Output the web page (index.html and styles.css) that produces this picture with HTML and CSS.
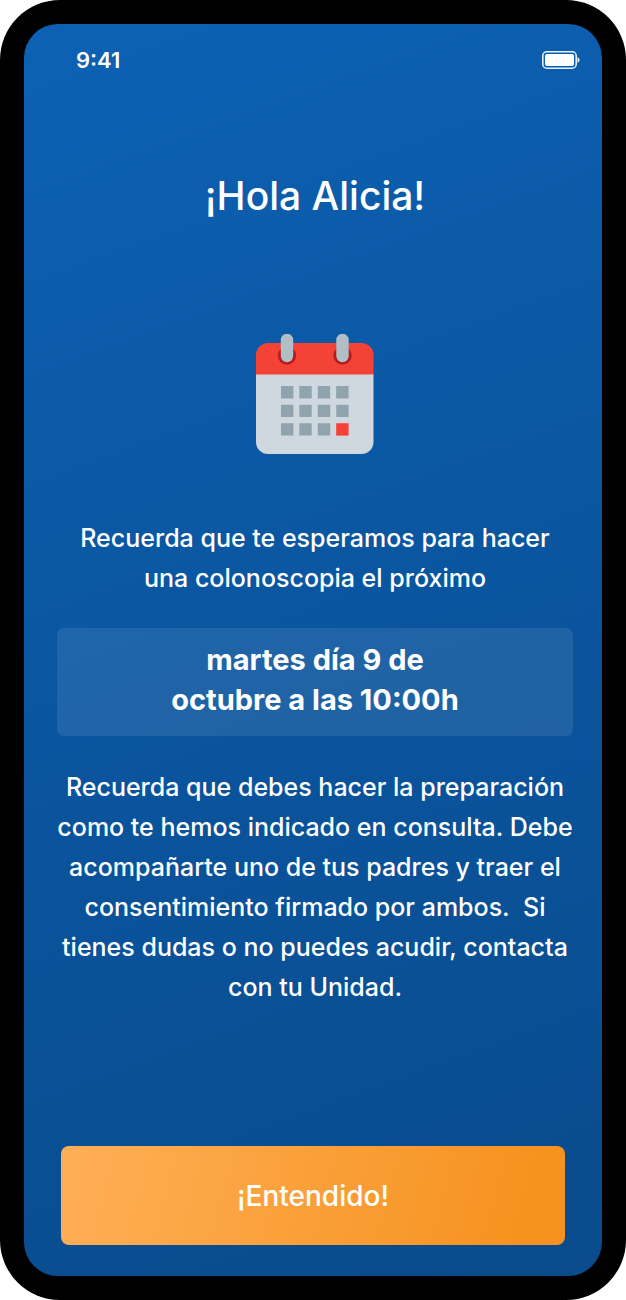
FILE: index.html
```
<!DOCTYPE html>
<html lang="es">
<head>
<meta charset="utf-8">
<meta name="viewport" content="width=device-width, initial-scale=1">
<title>Recordatorio de cita</title>
<link rel="stylesheet" href="styles.css">
</head>
<body>
<div class="phone">
  <div class="screen">
    <header class="status">
      <time class="clock">9:41</time>
      <svg class="battery" viewBox="0 0 38 18" aria-hidden="true">
        <rect x="0.8" y="0.8" width="33.4" height="16.4" rx="4" fill="none" stroke="#e6eff8" stroke-width="1.600"/>
        <rect x="3" y="3" width="29" height="12" rx="2" fill="#fff"/>
        <path d="M35.500 6.200c1.200.4 2 1.500 2 2.800s-.8 2.400-2 2.800z" fill="#e6eff8"/>
      </svg>
    </header>
    <main class="content">
      <h1 class="title">¡Hola Alicia!</h1>
      <svg class="calendar" viewBox="0 0 118 120" aria-hidden="true">
        <path d="M0 40h117.500v68a12 12 0 0 1-12 12h-93.500a12 12 0 0 1-12-12z" fill="#cfd8df"/>
        <path d="M12 9h93.500a12 12 0 0 1 12 12v19.500h-117.500v-19.500a12 12 0 0 1 12-12z" fill="#f44336"/>
        <circle cx="31" cy="21.500" r="9.200" fill="#b71c1c"/>
        <circle cx="86.500" cy="21.500" r="9.200" fill="#b71c1c"/>
        <path d="M31 6v16M86.500 6v16" stroke="#b0bec5" stroke-width="12.400" stroke-linecap="round"/>
        <path d="M25 52h12.400v12.400h-12.400zM43.300 52h12.400v12.400h-12.400zM61.800 52h12.400v12.400h-12.400zM80.200 52h12.400v12.400h-12.400zM25 70.700h12.400v12.400h-12.400zM43.300 70.700h12.400v12.400h-12.400zM61.800 70.700h12.400v12.400h-12.400zM80.200 70.700h12.400v12.400h-12.400zM25 89.200h12.400v12.400h-12.400zM43.300 89.200h12.400v12.400h-12.400zM61.800 89.200h12.400v12.400h-12.400z" fill="#90a4ae"/>
        <path d="M80.200 89.200h12.400v12.400h-12.400z" fill="#f44336"/>
      </svg>
      <p class="text">Recuerda que te esperamos para hacer<br>una colonoscopia el próximo</p>
      <p class="date">martes día 9 de<br>octubre a las 10:00h</p>
      <p class="text">Recuerda que debes hacer la preparación<br>como te hemos indicado en consulta. Debe<br>acompañarte uno de tus padres y traer el<br>consentimiento firmado por ambos.&nbsp; Si<br>tienes dudas o no puedes acudir, contacta<br>con tu Unidad.</p>
    </main>
    <button class="confirm" type="button">¡Entendido!</button>
  </div>
</div>
</body>
</html>
```
FILE: styles.css
```
* {
  box-sizing: border-box;
}

body {
  margin: 0;
  background: #fff;
  color: #fff;
  font-family: Inter, "Liberation Sans", sans-serif;
}

.phone {
  display: flex;
  min-height: 100vh;
  padding: 24px;
  border-radius: 60px;
  background: #000;
}

.screen {
  flex: 1;
  min-width: 0;
  display: flex;
  flex-direction: column;
  padding-bottom: 31px;
  border-radius: 34px;
  background: linear-gradient(160deg, #0d61b4 0%, #0a559f 50%, #094b8b 100%);
}

.status {
  display: flex;
  align-items: center;
  justify-content: space-between;
  padding: 23px 22px 0 52px;
}

.clock {
  font-size: 22px;
  line-height: 26px;
  font-weight: 600;
}

.battery {
  width: 38px;
  height: 18px;
}

.content {
  flex: 1;
  display: flex;
  flex-direction: column;
  align-items: center;
  padding: 97px 29px 0 33px;
  text-align: center;
}

.title {
  margin: 0;
  font-size: 39px;
  line-height: 52px;
  font-weight: 500;
}

.calendar {
  width: 118px;
  height: 120px;
  margin: 112px 0 64px;
}

.text {
  margin: 0;
  font-size: 25px;
  line-height: 40px;
  font-weight: 500;
  white-space: nowrap;
}

.date {
  align-self: stretch;
  margin: 30px 0 31px;
  padding: 12px 16px 16px;
  border-radius: 7px;
  background: rgba(255, 255, 255, 0.09);
  font-size: 29px;
  line-height: 40px;
  font-weight: 700;
}

.confirm {
  height: 99px;
  margin: 0 37px;
  border: 0;
  border-radius: 8px;
  background: linear-gradient(105deg, #ffaf57, #f69320 90%);
  color: #fff;
  font-family: inherit;
  font-size: 28px;
  font-weight: 500;
}
```
